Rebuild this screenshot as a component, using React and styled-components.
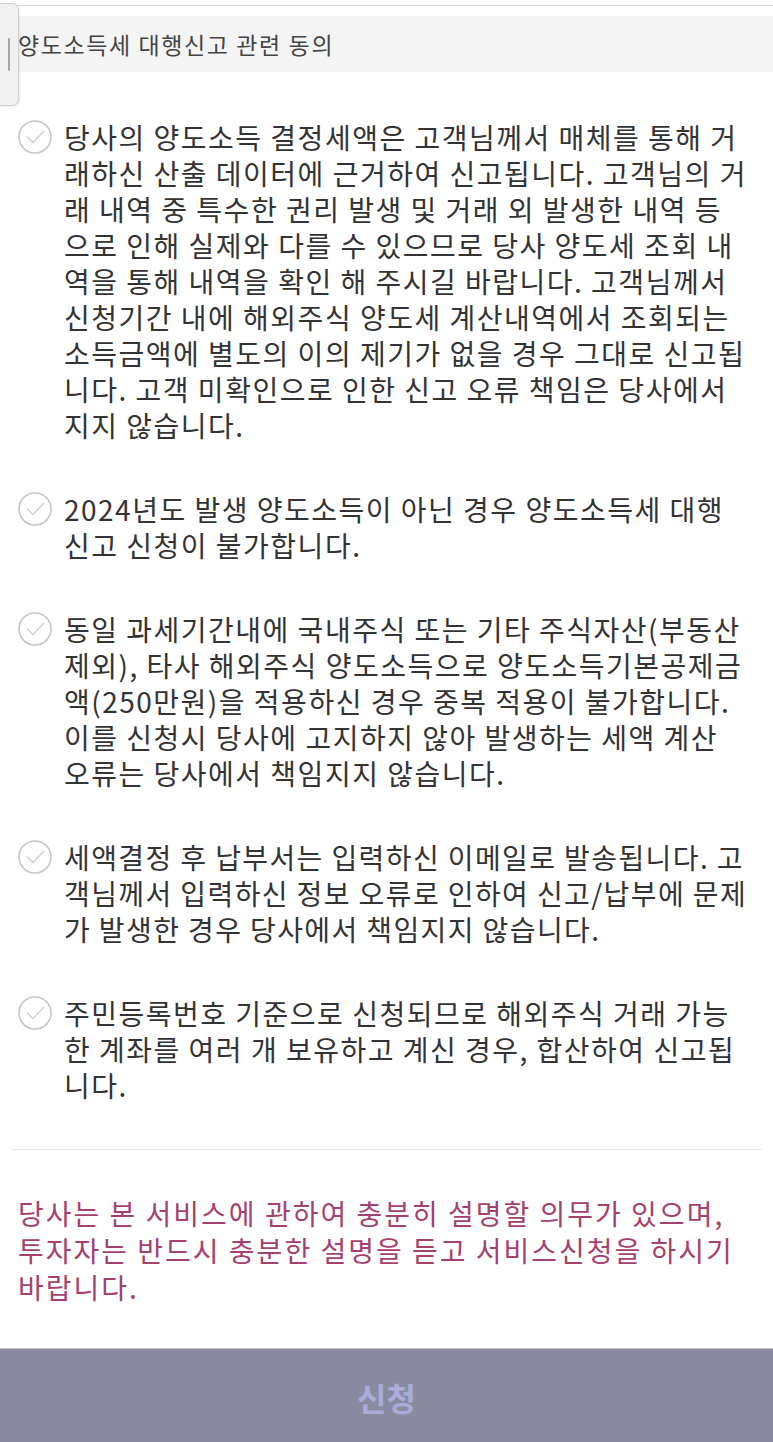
import styled, { createGlobalStyle } from "styled-components";

const GlobalStyle = createGlobalStyle`
  body {
    margin: 0;
    background: #ffffff;
    font-family: "Noto Sans CJK KR", "Noto Sans", sans-serif;
  }
`;

const items = [
  { text: "당사의 양도소득 결정세액은 고객님께서 매체를 통해 거래하신 산출 데이터에 근거하여 신고됩니다. 고객님의 거래 내역 중 특수한 권리 발생 및 거래 외 발생한 내역 등으로 인해 실제와 다를 수 있으므로 당사 양도세 조회 내역을 통해 내역을 확인 해 주시길 바랍니다. 고객님께서 신청기간 내에 해외주식 양도세 계산내역에서 조회되는 소득금액에 별도의 이의 제기가 없을 경우 그대로 신고됩니다. 고객 미확인으로 인한 신고 오류 책임은 당사에서 지지 않습니다." },
  { text: "2024년도 발생 양도소득이 아닌 경우 양도소득세 대행신고 신청이 불가합니다." },
  { text: "동일 과세기간내에 국내주식 또는 기타 주식자산(부동산 제외), 타사 해외주식 양도소득으로 양도소득기본공제금액(250만원)을 적용하신 경우 중복 적용이 불가합니다. 이를 신청시 당사에 고지하지 않아 발생하는 세액 계산 오류는 당사에서 책임지지 않습니다." },
  { text: "세액결정 후 납부서는 입력하신 이메일로 발송됩니다. 고객님께서 입력하신 정보 오류로 인하여 신고/납부에 문제가 발생한 경우 당사에서 책임지지 않습니다.", spacing: 1.4 },
  { text: "주민등록번호 기준으로 신청되므로 해외주식 거래 가능한 계좌를 여러 개 보유하고 계신 경우, 합산하여 신고됩니다." },
];

function CheckIcon() {
  return (
    <svg width="36" height="36" viewBox="0 0 36 36">
      <circle cx="18" cy="18" r="16" fill="none" stroke="#c6c6c6" strokeWidth="1.6" />
      <path d="M10.5 18 L16 23.5 L26.5 12.5" fill="none" stroke="#d2d2d2" strokeWidth="1.6" strokeLinecap="round" strokeLinejoin="round" />
    </svg>
  );
}

function App() {
  return (
    <>
      <GlobalStyle />
      <Page>
        <SideTab>
          <TabGrip />
        </SideTab>
        <TopLine />
        <Header>양도소득세 대행신고 관련 동의</Header>
        <List>
          {items.map((item, i) => (
            <Item key={i}>
              <IconBox>
                <CheckIcon />
              </IconBox>
              <ItemText $spacing={item.spacing}>{item.text}</ItemText>
            </Item>
          ))}
        </List>
        <Divider />
        <Notice>
          당사는 본 서비스에 관하여 충분히 설명할 의무가 있으며, 투자자는 반드시 충분한 설명을 듣고 서비스신청을 하시기 바랍니다.
        </Notice>
        <SubmitButton>신청</SubmitButton>
      </Page>
    </>
  );
}

const Page = styled.div`
  position: relative;
  width: 773px;
  padding-top: 5px;
`;

const SideTab = styled.div`
  position: absolute;
  left: -2px;
  top: 3px;
  width: 19px;
  height: 101px;
  background: #f1f1f1;
  border: 1px solid #cfcfcf;
  border-radius: 0 7px 7px 0;
  box-shadow: 1px 1px 2px rgba(0, 0, 0, 0.08);
  display: flex;
  align-items: center;
  justify-content: center;
  z-index: 2;
`;

const TabGrip = styled.div`
  width: 2px;
  height: 33px;
  background: #a8a8a8;
  border-radius: 1px;
`;

const TopLine = styled.div`
  height: 1px;
  background: #d4d4d4;
  margin-bottom: 10px;
`;

const Header = styled.div`
  height: 56px;
  background: #f4f4f4;
  display: flex;
  align-items: center;
  padding-left: 18px;
  font-size: 23px;
  color: #444444;
  letter-spacing: 1.6px;
`;

const List = styled.div`
  display: flex;
  flex-direction: column;
  gap: 48px;
  padding: 47px 25px 0 18px;
`;

const Item = styled.div`
  display: flex;
  align-items: flex-start;
  gap: 11px;
`;

const IconBox = styled.div`
  flex: 0 0 36px;
  height: 36px;
  margin-left: -1px;
  display: flex;
  align-items: center;
  justify-content: center;
`;

const ItemText = styled.div`
  flex: 1;
  font-size: 28px;
  line-height: 36px;
  color: #333333;
  letter-spacing: ${({ $spacing }) => $spacing ?? 1.5}px;
`;

const Divider = styled.div`
  height: 1px;
  background: #e6e6e6;
  margin: 46px 11px 0 11px;
`;

const Notice = styled.div`
  padding: 45px 25px 42px 18px;
  font-size: 28px;
  line-height: 37px;
  color: #a5416e;
  letter-spacing: 2px;
`;

const SubmitButton = styled.div`
  height: 95px;
  background: #8a8aa1;
  border-top: 1px solid #c4c4c8;
  display: flex;
  align-items: center;
  justify-content: center;
  font-size: 32px;
  font-weight: 700;
  color: #aaacd8;
`;

export default App;
